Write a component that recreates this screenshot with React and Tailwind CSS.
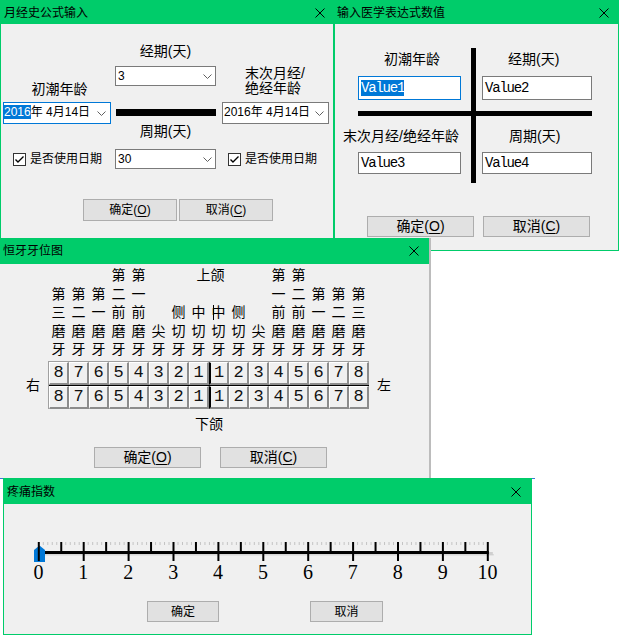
const SANS = "[font-family:'Liberation_Sans','Noto_Sans_CJK_SC',sans-serif]";

function CloseX() {
  return (
    <svg width="10" height="10" viewBox="0 0 10 10" className="block shrink-0">
      <path d="M0.5 0.5L9.5 9.5M9.5 0.5L0.5 9.5" stroke="#000" strokeWidth="1" />
    </svg>
  );
}

function Chevron() {
  return (
    <svg width="9" height="5" viewBox="0 0 9 5" className="block shrink-0">
      <path d="M0.5 0.5L4.5 4.5L8.5 0.5" fill="none" stroke="#606060" strokeWidth="1" />
    </svg>
  );
}

function CheckBox({ label }) {
  return (
    <div className="flex h-[20px] items-center gap-[4px]">
      <svg width="13" height="13" viewBox="0 0 13 13" className="block shrink-0">
        <rect x="0.5" y="0.5" width="12" height="12" fill="#fff" stroke="#333" />
        <path d="M2.5 6.5L5 9L10.5 3.5" fill="none" stroke="#000" strokeWidth="1.4" />
      </svg>
      <span className="text-[12px] leading-[14px] whitespace-nowrap">{label}</span>
    </div>
  );
}

function Btn({ children, className }) {
  return (
    <div className={`flex items-center justify-center border border-[#adadad] bg-[#e1e1e1] whitespace-nowrap ${className}`}>
      {children}
    </div>
  );
}

function TitleBar({ title, className }) {
  return (
    <div className={`flex shrink-0 items-center justify-between bg-[#00cc6a] ${className}`}>
      <span className="text-[12px] leading-[14px] whitespace-nowrap">{title}</span>
      <CloseX />
    </div>
  );
}

function Combo({ value, className }) {
  return (
    <div className={`flex h-[20px] items-center justify-between border border-[#7a7a7a] bg-white pl-[2px] pr-[3px] ${className}`}>
      <span className="text-[12px] leading-[14px]">{value}</span>
      <Chevron />
    </div>
  );
}

function DatePicker({ focused, className }) {
  return (
    <div
      className={`flex h-[22px] items-center justify-between bg-white border pr-[4px] ${
        focused ? "border-[#0078d7]" : "border-[#7a7a7a] pl-[1px]"
      } ${className}`}
    >
      <span className="mb-[2px] text-[12px] leading-[14px] whitespace-nowrap">
        {focused ? <span className="bg-[#0078d7] text-white">2016</span> : "2016"}年 4月14日
      </span>
      <Chevron />
    </div>
  );
}

function TextBox({ value, focused, className }) {
  return (
    <div
      className={`flex items-center bg-white border pl-[2px] [font-family:'Liberation_Mono',monospace] text-[14px] tracking-[-1.2px] ${
        focused ? "border-[#0078d7]" : "border-[#7a7a7a]"
      } ${className}`}
    >
      {focused ? (
        <span className="inline-block bg-[#0078d7] leading-[16px] text-white">{value}</span>
      ) : (
        <span className="leading-[16px]">{value}</span>
      )}
    </div>
  );
}

function MenstrualDialog() {
  return (
    <div className="absolute left-0 top-0 flex h-[240px] w-[334px] flex-col border border-[#00cc6a] bg-[#f0f0f0]">
      <TitleBar title="月经史公式输入" className="h-[23px] pl-[3px] pr-[8px]" />
      <div className="flex pl-[2px]">
        <div className="flex w-[108px] flex-col">
          <div className="mt-[57px] pl-[5px] text-center text-[14px] leading-[16px]">初潮年龄</div>
          <DatePicker focused className="mt-[5px]" />
          <div className="mt-[25px] pl-[10px]">
            <CheckBox label="是否使用日期" />
          </div>
        </div>
        <div className="ml-[4px] flex w-[101px] flex-col">
          <div className="mt-[19px] text-center text-[14px] leading-[16px]">经期(天)</div>
          <Combo value="3" className="mt-[7px]" />
          <div className="ml-[1px] mt-[23px] h-[7px] w-[100px] bg-black" />
          <div className="mt-[7px] text-center text-[14px] leading-[16px]">周期(天)</div>
          <Combo value="30" className="mt-[10px]" />
        </div>
        <div className="ml-[6px] flex w-[107px] flex-col">
          <div className="mt-[42px] pl-[23px] text-[14px] leading-[15px] whitespace-nowrap">
            末次月经/
            <br />
            绝经年龄
          </div>
          <DatePicker className="mt-[6px]" />
          <div className="mt-[25px] pl-[6px]">
            <CheckBox label="是否使用日期" />
          </div>
        </div>
      </div>
      <div className="mt-[30px] flex gap-[2px] pl-[82px] text-[12px]">
        <Btn className="h-[22px] w-[94px]">
          确定(<span className="underline underline-offset-2">O</span>)
        </Btn>
        <Btn className="h-[22px] w-[94px]">
          取消(<span className="underline underline-offset-2">C</span>)
        </Btn>
      </div>
    </div>
  );
}

function ExpressionDialog() {
  return (
    <div className="absolute left-[334px] top-0 flex h-[251px] w-[285px] flex-col border border-[#00cc6a] bg-[#f0f0f0]">
      <TitleBar title="输入医学表达式数值" className="h-[23px] pl-[2px] pr-[9px]" />
      <div className="ml-[5px] mt-[24px] grid grid-cols-[131px_5px_124px] grid-rows-[63px_5px_67px]">
        <div className="col-start-1 row-start-1 flex flex-col pt-[3px]">
          <div className="ml-[44px] text-[14px] leading-[16px]">初潮年龄</div>
          <TextBox value="Value1" focused className="ml-[18px] mt-[9px] h-[24px] w-[103px]" />
        </div>
        <div className="col-start-3 row-start-1 flex flex-col pt-[3px]">
          <div className="ml-[32px] text-[14px] leading-[16px]">经期(天)</div>
          <TextBox value="Value2" className="ml-[6px] mt-[9px] h-[24px] w-[110px]" />
        </div>
        <div className="col-span-3 col-start-1 row-start-2 ml-[18px] w-[234px] bg-black" />
        <div className="col-start-2 row-span-3 row-start-1 bg-black" />
        <div className="col-start-1 row-start-3 flex flex-col pt-[12px]">
          <div className="ml-[3px] text-[14px] leading-[16px] whitespace-nowrap">末次月经/绝经年龄</div>
          <TextBox value="Value3" className="ml-[18px] mt-[8px] h-[22px] w-[103px]" />
        </div>
        <div className="col-start-3 row-start-3 flex flex-col pt-[12px]">
          <div className="ml-[33px] text-[14px] leading-[16px]">周期(天)</div>
          <TextBox value="Value4" className="ml-[6px] mt-[8px] h-[22px] w-[110px]" />
        </div>
      </div>
      <div className="mt-[33px] flex gap-[9px] pl-[32px] text-[14px]">
        <Btn className="h-[21px] w-[107px]">
          确定(<span className="underline underline-offset-2">O</span>)
        </Btn>
        <Btn className="h-[21px] w-[107px]">
          取消(<span className="underline underline-offset-2">C</span>)
        </Btn>
      </div>
    </div>
  );
}

const RIGHT_TEETH = ["第三磨牙", "第二磨牙", "第一磨牙", "第二前磨牙", "第一前磨牙", "尖牙", "侧切牙", "中切牙"];
const LEFT_TEETH = ["中切牙", "侧切牙", "尖牙", "第一前磨牙", "第二前磨牙", "第一磨牙", "第二磨牙", "第三磨牙"];
const NUMBERS = [8, 7, 6, 5, 4, 3, 2, 1, 1, 2, 3, 4, 5, 6, 7, 8];

function ToothRow() {
  return (
    <div className="flex">
      {NUMBERS.map((n, i) => (
        <div
          key={i}
          className={
            i === 8
              ? "flex h-[23px] w-[20px] items-center justify-center border-b-2 border-l-2 border-r-2 border-t border-b-[#8c8c8c] border-l-black border-r-[#8c8c8c] border-t-white bg-[#f0f0f0]"
              : "flex h-[23px] w-[20px] items-center justify-center border-b-2 border-l border-r-2 border-t border-b-[#8c8c8c] border-l-white border-r-[#8c8c8c] border-t-white bg-[#f0f0f0]"
          }
        >
          <span className="[font-family:'Liberation_Mono',monospace] text-[17px] leading-[16px] text-[#111]">{n}</span>
        </div>
      ))}
    </div>
  );
}

function TeethDialog() {
  const cols = [...RIGHT_TEETH, ...LEFT_TEETH];
  return (
    <div className="absolute left-0 top-[238px] flex h-[242px] w-[431px] flex-col border-r-2 border-[#bcbcbc] bg-[#f0f0f0]">
      <TitleBar title="恒牙牙位图" className="h-[26px] pl-[3px] pr-[10px]" />
      <div className="mt-[1px] flex pl-[48.5px] [font-family:'Noto_Sans_CJK_SC',sans-serif] text-[14px] leading-[18.5px] text-black">
        {cols.map((name, i) => (
          <div key={i} className="flex h-[92.5px] w-[20px] flex-col justify-end">
            {i === 7 && (
              <>
                <div className="ml-[8px] whitespace-nowrap">上颌</div>
                <div className="h-[18.5px]" />
              </>
            )}
            {Array.from(name).map((ch, j) =>
              i === 8 && j === 0 ? (
                <div key={j} className="relative text-center">
                  {ch}
                  <span className="absolute left-[4px] top-[3px] h-[15px] w-px bg-black" />
                </div>
              ) : (
                <div key={j} className="text-center text-black">
                  {ch}
                </div>
              )
            )}
          </div>
        ))}
      </div>
      <div className="mt-[3.5px] flex items-center pl-[26px]">
        <div className="text-[14px] leading-[16px]">右</div>
        <div className="ml-[8px] flex w-[321px] flex-col border-l border-t border-[#a0a0a0]">
          <ToothRow />
          <div className="h-px bg-black" />
          <ToothRow />
        </div>
        <div className="ml-[8px] text-[14px] leading-[16px]">左</div>
      </div>
      <div className="ml-[195px] mt-[7px] text-[14px] leading-[16px]">下颌</div>
      <div className="mt-[15px] flex gap-[19px] pl-[94px] text-[14px]">
        <Btn className="h-[21px] w-[107px]">
          确定(<span className="underline underline-offset-2">O</span>)
        </Btn>
        <Btn className="h-[21px] w-[107px]">
          取消(<span className="underline underline-offset-2">C</span>)
        </Btn>
      </div>
    </div>
  );
}

function PainSlider() {
  const x0 = 18.8;
  const step = 44.9;
  const minor = [];
  for (let k = 0; k <= 100; k++) if (k % 5 !== 0) minor.push(x0 + (step * k) / 10);
  const majors = Array.from({ length: 11 }, (_, i) => x0 + step * i);
  const halves = Array.from({ length: 10 }, (_, i) => x0 + step * (i + 0.5));
  return (
    <svg width="480" height="24" viewBox="0 0 480 24" className="block">
      {minor.map((x, i) => (
        <rect key={i} x={x - 0.5} y="4" width="1" height="3" fill="#c4c4c4" />
      ))}
      <rect x={x0} y="16" width="455" height="1.5" fill="#d6d6d6" />
      <rect x={x0 + step * 10 - 1} y="14" width="6" height="3" fill="#cfcfcf" />
      <rect x={x0 - 1} y="13" width={step * 10 + 2} height="3" fill="#000" />
      <polygon points="14,12 19.5,7.5 25,12 25,24 14,24" fill="#0078d7" />
      {majors.map((x, i) => (
        <rect key={i} x={x - 1} y="4" width="2" height="19" fill="#000" />
      ))}
      {halves.map((x, i) => (
        <rect key={i} x={x - 1} y="4" width="2" height="9" fill="#000" />
      ))}
    </svg>
  );
}

function PainDialog() {
  return (
    <div className="absolute left-[3px] top-[478px] flex h-[157px] w-[529px] flex-col border border-[#00cc6a] bg-[#f0f0f0]">
      <TitleBar title="疼痛指数" className="h-[25px] pl-[3px] pr-[10px]" />
      <div className="ml-[16px] mt-[34px]">
        <PainSlider />
      </div>
      <div className="ml-[12px] grid w-[494px] grid-cols-11 [font-family:'Liberation_Serif',serif] text-[20px] leading-[20px]">
        {Array.from({ length: 11 }, (_, i) => (
          <div key={i} className="text-center">
            {i}
          </div>
        ))}
      </div>
      <div className="mt-[19px] flex gap-[91px] pl-[143px] text-[12px]">
        <Btn className="h-[21px] w-[72px]">确定</Btn>
        <Btn className="h-[21px] w-[73px]">取消</Btn>
      </div>
    </div>
  );
}

export default function App() {
  return (
    <div className={`relative h-[638px] w-[624px] overflow-hidden bg-white text-black ${SANS}`}>
      <MenstrualDialog />
      <ExpressionDialog />
      <TeethDialog />
      <div className="absolute left-0 top-[478px] h-[160px] w-[535px] border-t border-[#3b78d8] bg-white" />
      <PainDialog />
    </div>
  );
}
